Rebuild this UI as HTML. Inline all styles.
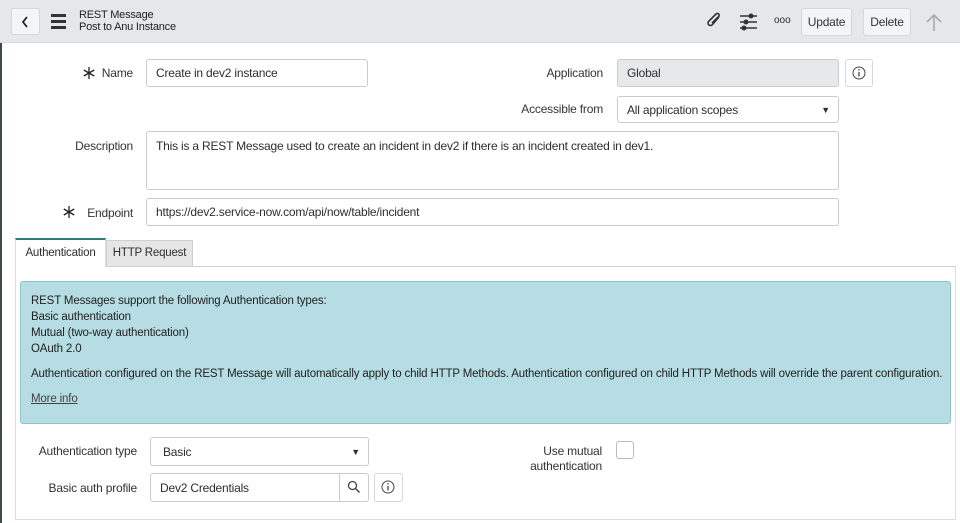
<!DOCTYPE html>
<html><head><meta charset="utf-8">
<style>
*{box-sizing:border-box;margin:0;padding:0}
body{width:960px;height:523px;overflow:hidden;background:#fff;font-family:"Liberation Sans",sans-serif;font-size:12px;letter-spacing:-0.2px;color:#2e2e2e;position:relative}
.a{position:absolute}
.hdr{left:0;top:0;width:960px;height:43px;background:#e5e7e9;border-bottom:1px solid #d6d8da}
.lb{position:absolute;text-align:right;color:#333}
.in{position:absolute;border:1px solid #c9cbcd;border-radius:3px;background:#fff;padding:0 9px;line-height:26px;white-space:nowrap;overflow:hidden}
.btn{position:absolute;border:1px solid #d5d7d9;background:#f3f4f5;border-radius:3px;text-align:center;line-height:26px;color:#333}
.car{position:absolute;right:8px;top:0;font-size:9px}
</style></head><body>
<div class="a" style="left:0;top:43px;width:2px;height:480px;background:#3c4a4e"></div>
<div class="a hdr"></div>
<div class="btn" style="left:11px;top:8px;width:29px;height:27px;background:#f4f5f6"></div>
<svg class="a" style="left:20px;top:15px" width="10" height="14" viewBox="0 0 10 14"><path d="M7 2L3 7l4 5" fill="none" stroke="#222" stroke-width="1.8"/></svg>
<div class="a" style="left:51px;top:14px;width:15px;height:3px;background:#333"></div>
<div class="a" style="left:51px;top:20px;width:15px;height:3px;background:#333"></div>
<div class="a" style="left:51px;top:26px;width:15px;height:3px;background:#333"></div>
<div class="a" style="left:79px;top:9px;font-size:11px;line-height:12px;color:#222">REST Message<br>Post to Anu Instance</div>
<svg class="a" style="left:704px;top:11px" width="20" height="20" viewBox="0 0 20 20"><path d="M15 6 L8 14 a2.5 2.5 0 0 1-3.5-3.5 L12 3 a1.8 1.8 0 0 1 2.6 2.6 L8 12" fill="none" stroke="#333" stroke-width="1.6"/></svg>
<svg class="a" style="left:739px;top:12px" width="20" height="20" viewBox="0 0 20 20" stroke="#333" stroke-width="1.5"><path d="M1 4h17M1 10h17M1 16h17"/><circle cx="12" cy="4" r="1.8" fill="#333"/><circle cx="7" cy="10" r="1.8" fill="#333"/><circle cx="5" cy="16" r="1.8" fill="#333"/></svg>
<div class="a" style="left:774px;top:15px;font-size:10px;letter-spacing:0">ooo</div>
<div class="btn" style="left:801px;top:8px;width:51px;height:28px">Update</div>
<div class="btn" style="left:863px;top:8px;width:48px;height:28px">Delete</div>
<svg class="a" style="left:925px;top:12px" width="18" height="20" viewBox="0 0 18 20"><path d="M9 19V3M2 10l7-7 7 7" fill="none" stroke="#aaa" stroke-width="1.6"/></svg>

<svg class="a" style="left:83px;top:67px" width="12" height="12" viewBox="0 0 12 12" stroke="#222" stroke-width="1.3"><path d="M6 0v12M0.8 3l10.4 6M0.8 9l10.4-6"/></svg>
<div class="lb" style="left:90px;top:66px;width:43px">Name</div>
<div class="in" style="left:146px;top:59px;width:222px;height:28px">Create in dev2 instance</div>
<div class="lb" style="left:480px;top:66px;width:123px">Application</div>
<div class="in" style="left:617px;top:59px;width:222px;height:28px;background:#e6e8ea">Global</div>
<div class="btn" style="left:845px;top:59px;width:28px;height:28px;background:#fff"></div>
<svg class="a" style="left:852px;top:66px" width="14" height="14" viewBox="0 0 14 14"><circle cx="7" cy="7" r="6" fill="none" stroke="#444"/><path d="M7 6v4.5" stroke="#444" stroke-width="1.3"/><circle cx="7" cy="3.8" r=".8" fill="#444"/></svg>
<div class="lb" style="left:480px;top:102px;width:123px">Accessible from</div>
<div class="in" style="left:617px;top:96px;width:222px;height:27px">All application scopes<span class="car">&#9660;</span></div>
<div class="lb" style="left:40px;top:139px;width:93px">Description</div>
<div class="in" style="left:146px;top:131px;width:693px;height:59px;line-height:28px">This is a REST Message used to create an incident in dev2 if there is an incident created in dev1.</div>
<svg class="a" style="left:63px;top:206px" width="12" height="12" viewBox="0 0 12 12" stroke="#222" stroke-width="1.3"><path d="M6 0v12M0.8 3l10.4 6M0.8 9l10.4-6"/></svg>
<div class="lb" style="left:60px;top:206px;width:73px">Endpoint</div>
<div class="in" style="left:146px;top:198px;width:693px;height:28px">https://dev2.service-now.com/api/now/table/incident</div>

<div class="a" style="left:15px;top:266px;width:941px;height:254px;border:1px solid #dcdcdc;border-top:1px solid #d0d0d0"></div>
<div class="a" style="left:15px;top:238px;width:91px;height:29px;background:#fff;border:1px solid #dcdcdc;border-top:2px solid #2e7d74;border-bottom:none;line-height:26px;text-align:center;font-size:11.5px">Authentication</div>
<div class="a" style="left:106px;top:240px;width:87px;height:26px;background:#e6e6e6;border:1px solid #d0d0d0;border-bottom:none;line-height:25px;text-align:center;font-size:11.5px">HTTP Request</div>
<div class="a" style="left:20px;top:281px;width:931px;height:143px;background:#b5dde3;border:1px solid #8cc3cc;border-radius:3px;padding:11px 10px;line-height:16px;color:#222;font-size:11.5px;letter-spacing:-0.15px;white-space:nowrap">
REST Messages support the following Authentication types:<br>Basic authentication<br>Mutual (two-way authentication)<br>OAuth 2.0
<div style="margin-top:9px">Authentication configured on the REST Message will automatically apply to child HTTP Methods. Authentication configured on child HTTP Methods will override the parent configuration.</div>
<div style="margin-top:9px;text-decoration:underline;color:#444">More info</div>
</div>
<div class="lb" style="left:20px;top:444px;width:117px">Authentication type</div>
<div class="in" style="left:150px;top:437px;width:219px;height:29px;line-height:28px;padding-left:12px">Basic<span class="car">&#9660;</span></div>
<div class="lb" style="left:20px;top:481px;width:117px">Basic auth profile</div>
<div class="in" style="left:150px;top:473px;width:219px;height:29px;line-height:28px">Dev2 Credentials</div>
<div class="a" style="left:339px;top:473px;width:1px;height:29px;background:#c9cbcd"></div>
<svg class="a" style="left:347px;top:480px" width="14" height="14" viewBox="0 0 14 14"><circle cx="5.5" cy="5.5" r="4" fill="none" stroke="#444" stroke-width="1.3"/><path d="M8.5 8.5L12.5 12.5" stroke="#444" stroke-width="1.5"/></svg>
<div class="btn" style="left:374px;top:473px;width:29px;height:29px;background:#fff"></div>
<svg class="a" style="left:381px;top:480px" width="14" height="14" viewBox="0 0 14 14"><circle cx="7" cy="7" r="6" fill="none" stroke="#444"/><path d="M7 6v4.5" stroke="#444" stroke-width="1.3"/><circle cx="7" cy="3.8" r=".8" fill="#444"/></svg>
<div class="lb" style="left:480px;top:444px;width:122px;line-height:15px">Use mutual<br>authentication</div>
<div class="a" style="left:616px;top:441px;width:18px;height:18px;border:1px solid #bbb;border-radius:3px"></div>
</body></html>
